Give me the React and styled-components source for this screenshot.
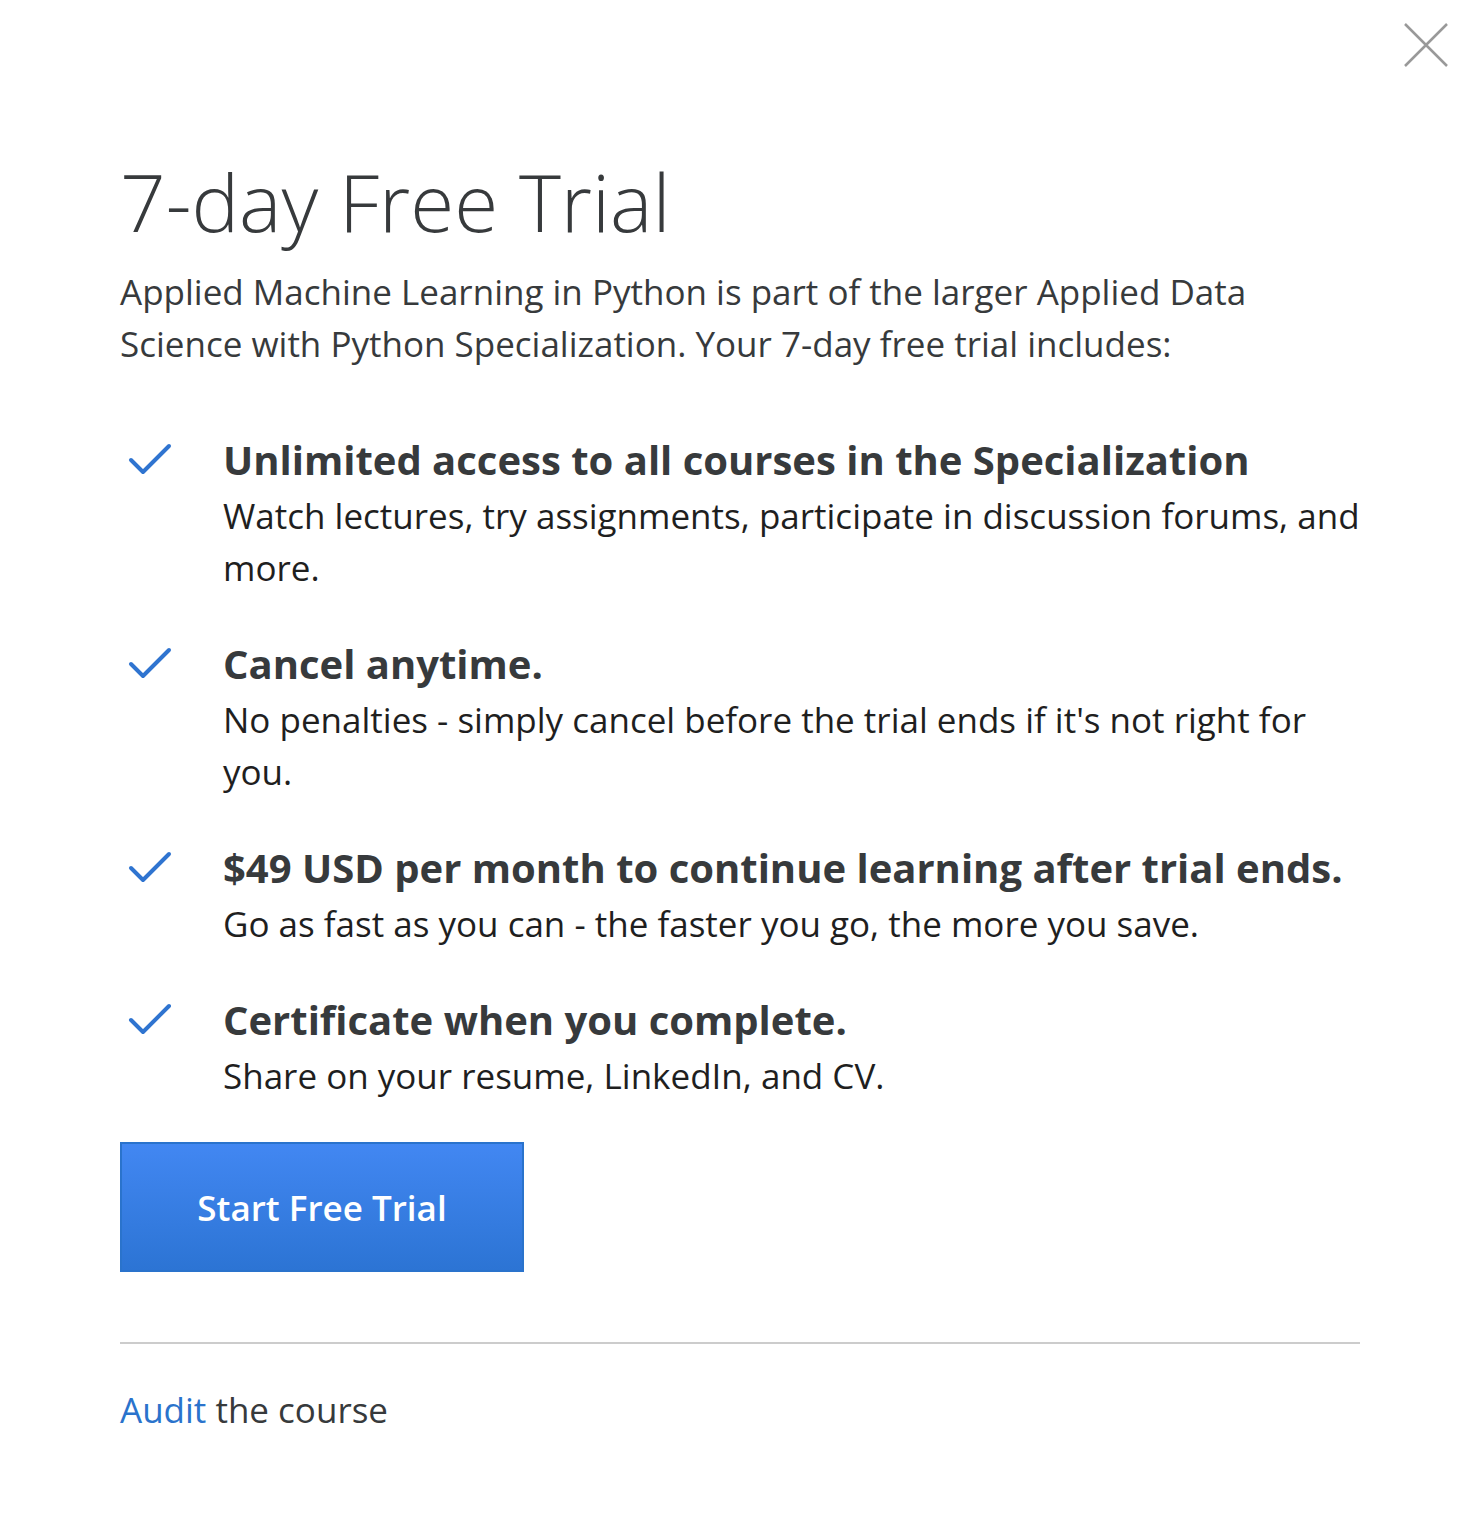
import React from 'react';
import styled, { createGlobalStyle } from 'styled-components';

const GlobalStyle = createGlobalStyle`
  body {
    margin: 0;
    background: #fff;
    font-family: "Open Sans", "Noto Sans", sans-serif;
  }
`;

const StyledModal = styled.div`
  position: relative;
  width: 1479px;
  min-height: 1520px;
  box-sizing: border-box;
  padding: 151px 119px 80px 120px;
`;

const StyledCloseButton = styled.button`
  position: absolute;
  top: 20px;
  right: 30px;
  width: 48px;
  height: 48px;
  padding: 0;
  border: none;
  background: none;
  cursor: pointer;
`;

const StyledTitle = styled.h1`
  margin: 0;
  font-size: 80px;
  line-height: 100px;
  font-weight: 300;
  color: #373a3c;
`;

const StyledLead = styled.p`
  margin: 15px 0 0;
  font-size: 35px;
  line-height: 52px;
  font-weight: 400;
  color: #373a3c;
`;

const StyledList = styled.ul`
  list-style: none;
  margin: 62px 0 0;
  padding: 0;
  display: flex;
  flex-direction: column;
  gap: 42px;
`;

const StyledItem = styled.li`
  display: grid;
  grid-template-columns: 103px 1fr;
`;

const StyledCheck = styled.svg`
  margin: 10px 0 0 8px;
`;

const StyledItemTitle = styled.h3`
  margin: 0;
  font-size: 40px;
  line-height: 56px;
  font-weight: 700;
  color: #373a3c;
`;

const StyledItemText = styled.p`
  margin: 2px 0 0;
  font-size: 35px;
  line-height: 52px;
  color: #1f1f1f;
`;

const StyledStartButton = styled.button`
  margin-top: 40px;
  width: 404px;
  height: 130px;
  border: 2px solid #2a73cc;
  background: linear-gradient(#4287f2, #2c74d4);
  color: #fff;
  font-family: inherit;
  font-size: 35px;
  font-weight: 600;
  cursor: pointer;
`;

const StyledDivider = styled.hr`
  margin: 70px 0 0;
  border: none;
  border-top: 2px solid #cccccc;
`;

const StyledAudit = styled.p`
  margin: 40px 0 0;
  font-size: 35px;
  line-height: 52px;
  color: #373a3c;
`;

const StyledAuditLink = styled.a`
  color: #2a73cc;
  text-decoration: none;
`;

const features = [
  {
    title: 'Unlimited access to all courses in the Specialization',
    text: 'Watch lectures, try assignments, participate in discussion forums, and more.',
  },
  {
    title: 'Cancel anytime.',
    text: "No penalties - simply cancel before the trial ends if it's not right for you.",
  },
  {
    title: '$49 USD per month to continue learning after trial ends.',
    text: 'Go as fast as you can - the faster you go, the more you save.',
  },
  {
    title: 'Certificate when you complete.',
    text: 'Share on your resume, LinkedIn, and CV.',
  },
];

function CheckIcon() {
  return (
    <StyledCheck width="44" height="34" viewBox="0 0 44 34">
      <path
        d="M3 18 L15 30 L41 4"
        fill="none"
        stroke="#2f74d0"
        strokeWidth="4"
        strokeLinecap="round"
        strokeLinejoin="round"
      />
    </StyledCheck>
  );
}

export default function App() {
  return (
    <>
      <GlobalStyle />
      <StyledModal>
        <StyledCloseButton aria-label="Close">
          <svg width="48" height="48" viewBox="0 0 48 48">
            <path d="M4 4 L46 46 M46 4 L4 46" stroke="#999" strokeWidth="2.5" />
          </svg>
        </StyledCloseButton>
        <StyledTitle>7-day Free Trial</StyledTitle>
        <StyledLead>
          Applied Machine Learning in Python is part of the larger Applied Data
          Science with Python Specialization. Your 7-day free trial includes:
        </StyledLead>
        <StyledList>
          {features.map(({ title, text }) => (
            <StyledItem key={title}>
              <CheckIcon />
              <div>
                <StyledItemTitle>{title}</StyledItemTitle>
                <StyledItemText>{text}</StyledItemText>
              </div>
            </StyledItem>
          ))}
        </StyledList>
        <StyledStartButton>Start Free Trial</StyledStartButton>
        <StyledDivider />
        <StyledAudit>
          <StyledAuditLink href="#">Audit</StyledAuditLink> the course
        </StyledAudit>
      </StyledModal>
    </>
  );
}
